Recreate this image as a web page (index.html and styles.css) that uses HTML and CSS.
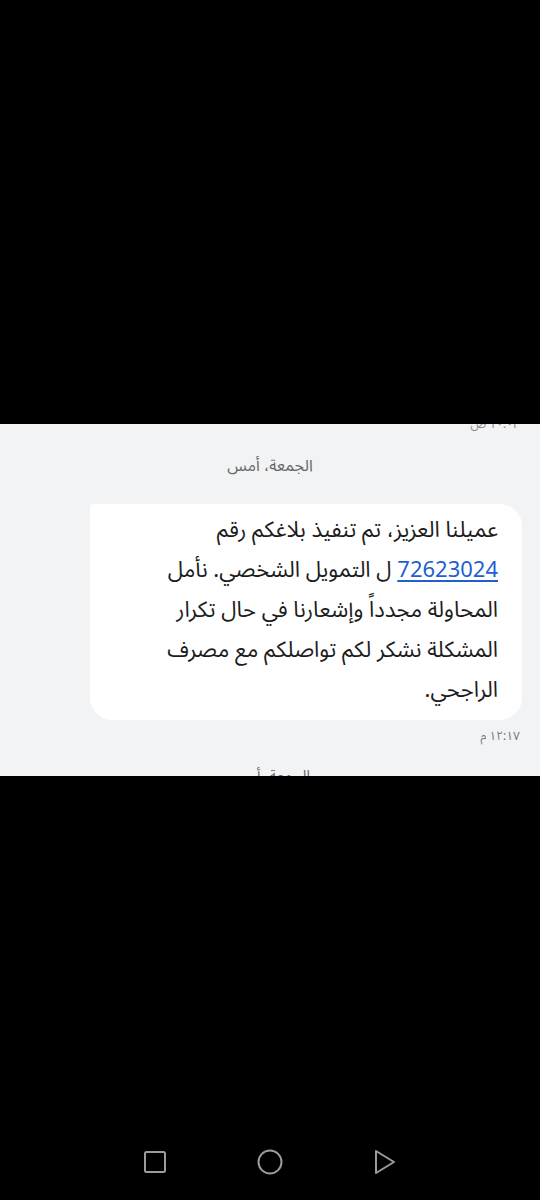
FILE: index.html
```html
<!DOCTYPE html>
<html lang="ar">
<head>
<meta charset="utf-8">
<link rel="stylesheet" href="styles.css">
</head>
<body>
<div class="screen">
  <div class="top-black"></div>
  <section class="chat" dir="rtl">
    <div class="cut-top">١٠:٠٣ ص</div>
    <div class="date">الجمعة، أمس</div>
    <div class="bubble">
      <p class="msg">عميلنا العزيز، تم تنفيذ بلاغكم رقم<br><a class="num" href="#">72623024</a> ل التمويل الشخصي. نأمل<br>المحاولة مجدداً وإشعارنا في حال تكرار<br>المشكلة نشكر لكم تواصلكم مع مصرف<br>الراجحي.</p>
    </div>
    <div class="time">١٢:١٧ م</div>
    <div class="cut-bottom">الجمعة، أمس</div>
  </section>
  <div class="bottom-black"></div>
  <nav class="navbar">
    <svg class="nav-icon" width="22" height="22" viewBox="0 0 22 22"><rect x="1" y="1" width="20" height="20" rx="1.5" fill="none" stroke="#9b9b9b" stroke-width="2"/></svg>
    <svg class="nav-icon" width="26" height="26" viewBox="0 0 26 26"><circle cx="13" cy="13" r="11.5" fill="none" stroke="#9b9b9b" stroke-width="2"/></svg>
    <svg class="nav-icon" width="22" height="26" viewBox="0 0 22 26"><path d="M2 2 L20 13 L2 24 Z" fill="none" stroke="#9b9b9b" stroke-width="2" stroke-linejoin="round"/></svg>
  </nav>
</div>
</body>
</html>
```
FILE: styles.css
```css
* { box-sizing: border-box; }
html, body { margin: 0; padding: 0; background: #000; }
.screen {
  width: 540px;
  height: 1200px;
  display: flex;
  flex-direction: column;
  background: #000;
  font-family: "Noto Sans Arabic", "DejaVu Sans", sans-serif;
}
.top-black { height: 424px; flex: none; }
.chat {
  height: 352px;
  flex: none;
  background: #f2f3f5;
  overflow: hidden;
  position: relative;
  display: flex;
  flex-direction: column;
}
.cut-top {
  position: absolute;
  top: -12px;
  right: 20px;
  font-size: 12px;
  color: #8a8a8a;
}
.cut-bottom {
  position: absolute;
  bottom: -16px;
  left: 0;
  right: 0;
  text-align: center;
  font-size: 15px;
  color: #666;
}
.date {
  margin-top: 30px;
  text-align: center;
  font-size: 16px;
  color: #666;
  line-height: 24px;
}
.bubble {
  margin: 26px 18px 0 90px;
  background: #fff;
  border-radius: 4px 22px 22px 22px;
  padding: 6px 24px 10px 20px;
}
.msg {
  margin: 0;
  font-size: 22px;
  line-height: 40px;
  color: #1c1c1c;
  text-align: right;
}
.num {
  color: #1f5fd1;
  text-decoration: underline;
  text-underline-offset: 3px;
}
.time {
  margin: 4px 20px 0 0;
  font-size: 12px;
  color: #777;
  text-align: right;
}
.bottom-black { flex: 1; }
.navbar {
  height: 58px;
  flex: none;
  display: flex;
  align-items: center;
  justify-content: space-between;
  padding: 0 144px 18px 144px;
}
.nav-icon { display: block; }
```
